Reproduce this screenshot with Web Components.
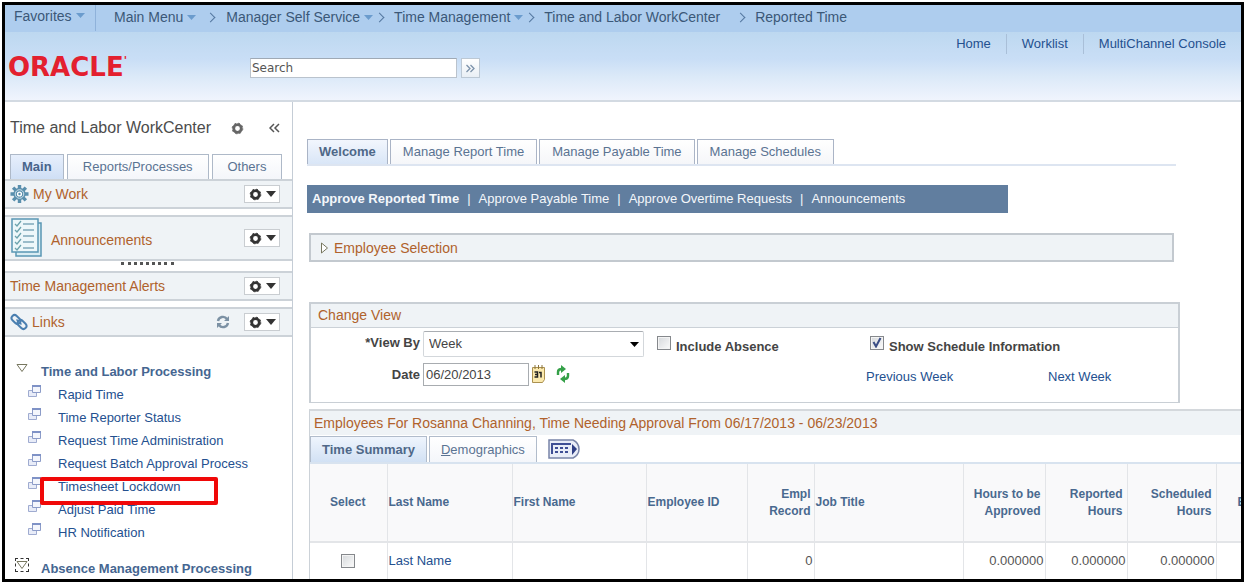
<!DOCTYPE html>
<html lang="en">
<head>
<meta charset="utf-8">
<title>Reported Time</title>
<style>
  html, body { margin: 0; height: 100%; background: #fff; }
  body {
    --xs: 12px; --s: 13px; --m: 14px; --l: 16px;
    --link: #24508f; --slate: #5a7392; --rust: #b0622c; --panel: #eff3f6; --line: #ccd2d8;
    font: 13px/20px "Liberation Sans", Arial, sans-serif;
    color: #444;
  }
</style>
</head>
<body>
<ps-app></ps-app>
<script>
const define = (name, css, html) => {
  const t = document.createElement('template');
  t.innerHTML = `<style>*{box-sizing:border-box}a{color:inherit;text-decoration:none}button,input,select{font:inherit;color:inherit;margin:0}svg{display:block;flex:none}${css}</style>${html}`;
  customElements.define(name, class extends HTMLElement {
    constructor() {
      super();
      this.attachShadow({ mode: 'open' }).append(t.content.cloneNode(true));
    }
  });
};

define('ps-caret', ':host{display:block}', `<svg width="9" height="5" viewBox="0 0 9 5"><path d="M0 0h9L4.500 5z" fill="#6b9ccd"/></svg>`);

define('crumb-bar', `
  :host{display:flex;height:27px;background:#aecdee;color:#3b5878;font-size:var(--m)}
  nav{display:flex;align-items:center;height:24px}
  a{display:flex;align-items:center;gap:4px;white-space:nowrap}
  .fav{width:91px;padding-left:9px;height:27px;border-right:1px solid #8fb2da;margin-right:18px;align-items:center;padding-bottom:3px}
  i{width:7px;height:7px;border:solid #54779f;border-width:1px 1px 0 0;transform:rotate(45deg);margin:0 12px 0 11px;flex:none}
  i.n{margin-left:3px;margin-right:11px}
  i.w{margin-left:17px;margin-right:11px}
  `, `<nav aria-label="Breadcrumb">
    <a class="fav" href="#">Favorites<ps-caret></ps-caret></a>
    <a href="#">Main Menu<ps-caret></ps-caret></a><i></i>
    <a href="#">Manager Self Service <ps-caret></ps-caret></a><i class="n"></i>
    <a href="#">Time Management <ps-caret></ps-caret></a><i class="n"></i>
    <a href="#">Time and Labor WorkCenter</a><i class="w"></i>
    <a href="#">Reported Time</a></nav>`);

define('page-header', `
  :host{display:grid;grid-template-columns:245px 1fr auto;height:70px;background:linear-gradient(#bdd8f0,#c9def6 40%,#dbe9f8 65%,#f0f4fd);border-bottom:2px solid #d3dae2}
  .logo{padding:21px 0 0 3px;font:bold 26px/28px "DejaVu Sans",sans-serif;color:#e3202f;display:flex}
  sup{font-size:11px;line-height:16px}
  form{display:flex;gap:4px;padding-top:26px;align-items:flex-start}
  input{width:207px;height:20px;border:1px solid #bac3cd;border-top-color:#9fa9b5;background:#fff;padding:0 1px;font:12px/16px "DejaVu Sans",sans-serif;color:#555}
  input::placeholder{color:#555;opacity:1}
  button{width:19px;height:20px;border:1px solid #bcc8d4;background:linear-gradient(#fff,#e9eff5);padding:0 4px}
  nav{display:flex;font-size:var(--s);color:var(--link);padding:2px 0 0}
  a{padding:0 15px;line-height:20px;height:20px;border-left:1px solid #a9bfd8}
  a:first-child{border:0}
  `, `<div class="logo">ORACLE<sup>'</sup></div>
   <form><input aria-label="Search" placeholder="Search"><button type="button" aria-label="Go"><svg width="9" height="9" viewBox="0 0 9 9" fill="none" stroke="#7c92aa" stroke-width="1.300"><path d="M.5 1l3.500 3.500L.5 8M4.500 1L8 4.500 4.500 8"/></svg></button></form>
   <nav><a href="#">Home</a><a href="#">Worklist</a><a href="#">MultiChannel Console</a></nav>`);

define('gear-ring', ':host{display:block}', `<svg width="13" height="13" viewBox="0 0 13 13"><circle cx="6.500" cy="6.500" r="3.800" fill="none" stroke="var(--ink,#333)" stroke-width="2.800"/><circle cx="6.500" cy="6.500" r="5.300" fill="none" stroke="var(--ink,#333)" stroke-width="1" stroke-dasharray="2 2.160"/></svg>`);

define('gear-menu', `
  :host{display:block}
  button{display:flex;align-items:center;gap:4px;width:36px;height:18px;background:#fff;border:1px solid #c9cdd1;padding:0 4px;}
  `, `<button type="button" aria-label="Actions"><gear-ring></gear-ring><svg width="10" height="6" viewBox="0 0 10 6"><path d="M0 0h10L5 6z" fill="#333"/></svg></button>`);

define('side-section', `
  :host{display:flex;align-items:center;height:30px;background:var(--panel);border:solid var(--line);border-width:2px 0;padding:0 12px 0 5px;margin-bottom:6px;color:var(--rust);font-size:var(--m)}
  :host([tall]){height:46px;margin-bottom:10px}
  h2{flex:1;margin:0;font:inherit;white-space:nowrap}
  :host([tall]) h2{padding-top:4px}
  ::slotted(svg){margin-right:4px}
  :host([tall]) ::slotted(svg){margin-right:8px}
  `, `<slot name="icon"></slot><h2><slot></slot></h2><slot name="extra"></slot><gear-menu></gear-menu>`);

define('tree-item', `
  :host{display:flex;height:23px;padding-left:23px;position:relative;color:var(--link);font-size:var(--s)}
  a{line-height:23px;margin-left:16px;white-space:nowrap}
  svg{margin-top:1px}
  .mark{display:none}
  :host([marked]) .mark{display:block;position:absolute;left:35px;top:2px;width:178px;height:28px;border:4px solid #f00808;border-radius:2px;z-index:1}
  `, `<svg width="14" height="14" viewBox="0 0 14 14"><path d="M.5 6.500h8v6h-8z" fill="#e8ecf8" stroke="#9fabd0"/><path d="M4.500 1.500h8v7h-8z" fill="#f4f6fc" stroke="#8c9cc8"/><path d="M4 1h9v2H4z" fill="#7f92c6"/></svg><a href="#"><slot></slot></a><span class="mark"></span>`);

define('tree-group', `
  :host{display:block}
  h3{margin:0;display:flex;height:23px;line-height:24px;font-size:var(--s);font-weight:bold;color:#456691;padding-left:10px;white-space:nowrap}
  button{border:1px solid transparent;background:none;width:14px;height:14px;padding:2px 0;margin:1px 12px 0 0}
  :host([focused]) button{border:1px dashed #333}
  `, `<h3><button type="button" aria-label="Collapse"><svg width="12" height="8" viewBox="0 0 12 8"><path d="M1 .5h10L6 7.500z" fill="#fff" stroke="#77775f"/></svg></button><slot name="title"></slot></h3><slot></slot>`);

define('work-center', `
  :host{display:flex;flex-direction:column;border-right:1px solid #c5cdd6}
  header{display:flex;align-items:center;height:52px;padding:0 12px 0 5px;--ink:#666}
  h1{flex:1;margin:0;font-size:var(--l);font-weight:normal;color:#4c4c4c;white-space:nowrap}
  header button{border:0;background:none;padding:0;margin-left:25px}
  .tabs{display:flex;gap:3px;padding:0 10px 0 5px;height:25px}
  .tabs button{border:1px solid #aeb9c8;border-bottom:0;background:linear-gradient(#fff,#f4f6fa);color:var(--slate);font-size:var(--s);line-height:20px;padding:0;height:25px}
  .tabs .on{background:linear-gradient(#e7effc,#cfdff5);font-weight:bold;color:#48648a}
  .tabs button:nth-child(1){flex:53}.tabs button:nth-child(2){flex:144}.tabs button:nth-child(3){flex:70}
  .drop{position:relative}
  .grip{position:absolute;left:116px;bottom:6px;width:53px;border-top:3px dotted #555}
  tree-group{margin-bottom:13px}
  .tree{padding-top:17px}
  `, `<header><h1>Time and Labor WorkCenter</h1><gear-ring></gear-ring><button type="button" aria-label="Collapse panel"><svg width="11" height="10" viewBox="0 0 11 10" fill="none" stroke="#555" stroke-width="1.500"><path d="M5 1L1 5l4 4M10 1L6 5l4 4"/></svg></button></header>
  <div class="tabs"><button type="button" class="on">Main</button><button type="button">Reports/Processes</button><button type="button">Others</button></div>
  <side-section><svg slot="icon" width="19" height="20" viewBox="0 0 20 20"><g stroke="#5a8fad" stroke-width="3.600"><path d="M10 .5v19M.5 10h19M3.300 3.300l13.400 13.400M16.700 3.300L3.300 16.700"/></g><circle cx="10" cy="10" r="6.500" fill="#5a8fad"/><circle cx="10" cy="10" r="4.500" fill="none" stroke="#d5e6ef"/><circle cx="10" cy="10" r="2" fill="none" stroke="#fff" stroke-width="1.500"/></svg>My Work</side-section>
  <div class="drop"><side-section tall><svg slot="icon" width="33" height="40" viewBox="0 0 33 40"><g fill="#d9ecf3" stroke="#5a97b4" stroke-width="1.500"><path d="M6 5h25v33H6z"/><path d="M2 1h26v33H2z" fill="#edf7fa"/></g><path d="M13 6h11M13 12h11M13 18h11M13 24h11M13 30h11" stroke="#7fa9ba" stroke-width="1.500"/><path d="M5 6l2 2 4-5M5 12l2 2 4-5M5 18l2 2 4-5M5 24l2 2 4-5M5 30l2 2 4-5" fill="none" stroke="#6ca3ad" stroke-width="1.300"/></svg>Announcements</side-section><div class="grip"></div></div>
  <side-section>Time Management Alerts</side-section>
  <side-section><svg slot="icon" width="18" height="18" viewBox="0 0 18 18" fill="none" stroke="#4a7fb0" stroke-width="2"><rect x="1" y="3.500" width="10" height="6" rx="3" transform="rotate(45 6 6.500)"/><rect x="7" y="8.500" width="10" height="6" rx="3" transform="rotate(45 12 11.500)"/><path d="M6.500 6.500l5 5" stroke-width="1.500"/></svg>Links<svg slot="extra" style="margin-right:14px" width="14" height="14" viewBox="0 0 14 14"><path d="M2 6a5 5 0 0 1 9-2M12 8a5 5 0 0 1-9 2" fill="none" stroke="#7c91a4" stroke-width="2.400"/><path d="M13 1v5H8zM1 13V8h5z" fill="#7c91a4"/></svg></side-section>
  <div class="tree">
   <tree-group><span slot="title">Time and Labor Processing</span>
    <tree-item>Rapid Time</tree-item><tree-item>Time Reporter Status</tree-item><tree-item>Request Time Administration</tree-item><tree-item>Request Batch Approval Process</tree-item><tree-item marked>Timesheet Lockdown</tree-item><tree-item>Adjust Paid Time</tree-item><tree-item>HR Notification</tree-item></tree-group>
   <tree-group focused><span slot="title">Absence Management Processing</span></tree-group>
  </div>`);

define('page-tabs', `
  :host{display:flex;gap:2px;height:27px;border-bottom:2px solid #dde5f1;margin-right:65px}
  button{border:solid #aab4c6;border-width:1px 1px 0;background:linear-gradient(#fff,#f5f6f9);color:var(--slate);font-size:var(--s);padding:0 12px;height:25px;white-space:nowrap}
  .on{background:linear-gradient(#f2f6fd,#d9e6f7);font-weight:bold;color:#4f6888;padding:0 11px}
  `, `<button type="button" class="on">Welcome</button><button type="button">Manage Report Time</button><button type="button">Manage Payable Time</button><button type="button">Manage Schedules</button>`);

define('sub-nav', `
  :host{display:flex;align-items:center;height:28px;background:#617e9f;color:#f4f7fb;font-size:var(--s);padding-left:5px;margin:19px 233px 20px 0;white-space:nowrap}
  span{margin:0 8px}
  `, `<a href="#"><b>Approve Reported Time</b></a><span>|</span><a href="#">Approve Payable Time</a><span>|</span><a href="#">Approve Overtime Requests</a><span>|</span><a href="#">Announcements</a>`);

define('employee-selection', `
  :host{display:flex;align-items:center;height:29px;border:2px solid #c3c9cf;background:var(--panel);color:var(--rust);font-size:var(--m);margin:0 67px 40px 2px;padding-left:9px;gap:5px}
  button{border:0;background:none;padding:0}h2{margin:0;font:inherit}
  `, `<button type="button" aria-label="Expand"><svg width="9" height="12" viewBox="0 0 9 12"><path d="M1.500 1v10l6-5z" fill="#fff" stroke="#77775f"/></svg></button><h2>Employee Selection</h2>`);

define('check-box', `
  :host{display:inline-block}
  label{display:flex;gap:5px;font-weight:bold;font-size:var(--s);line-height:20px;white-space:nowrap}
  .b{position:relative;width:14px;height:14px}
  input{appearance:none;display:block;width:14px;height:14px;border:1px solid #85888c;background:linear-gradient(135deg,#d5d8db,#fbfbfb);box-shadow:inset 0 0 0 1px #f4f4f4}
  svg{position:absolute;left:2px;top:1px;display:none}
  input:checked+svg{display:block}
  .t{padding-top:1px}
  .t.none{display:none}
  `, `<label><span class="b"><input type="checkbox"><svg width="10" height="11" viewBox="0 0 10 11"><path d="M1.500 5L4 9.500 8.500 1" fill="none" stroke="#3a4d85" stroke-width="2"/></svg></span><span class="t"><slot></slot></span></label>`);

define('change-view', `
  :host{display:block;border:1px solid #c9cfd5;border-width:2px 2px 1px;margin:0 61px 6px 2px;height:101px}
  h2{margin:0;font:inherit;font-size:var(--m);line-height:22px;height:24px;background:var(--panel);border-bottom:1px solid #cbd1d7;color:var(--rust);padding-left:7px}
  .f{display:grid;grid-template-columns:112px 221px 209px 182px 1fr;grid-template-rows:28px 26px;padding-top:3px;row-gap:2px}
  .l{font-weight:bold;font-size:var(--s);line-height:24px;text-align:right;padding-right:3px}
  .l.d{line-height:28px}
  .sel{position:relative}
  select{appearance:none;width:100%;height:26px;border:1px solid #d3d7db;border-top-color:#a9adb2;border-radius:2px;background:#fff;padding:0 5px;font-size:var(--s)}
  .sel svg{position:absolute;right:5px;top:11px;pointer-events:none}
  .date{display:flex;align-items:center}
  .date input{width:106px;height:23px;border:1px solid #a8acb0;padding:0 2px;font-size:var(--s)}
  .date button{border:0;background:none;padding:0;margin-left:3px}
  .date button+button{margin-left:11px}
  check-box{padding:5px 0 0 13px}
  a{color:var(--link);font-size:var(--s);line-height:32px;padding-left:13px}
  .p{grid-column:4}
  check-box.w{grid-column:4/6;padding-left:17px}
  `, `<h2>Change View</h2><div class="f"><label class="l" for="v">*View By</label><div class="sel"><select id="v"><option>Week</option></select><svg width="9" height="5" viewBox="0 0 9 5"><path d="M0 0h9L4.500 5z"/></svg></div><check-box>Include Absence</check-box><check-box class="w" on>Show Schedule Information</check-box>
  <label class="l d" for="d">Date</label><div class="date"><input id="d" value="06/20/2013"><button type="button" aria-label="Calendar"><svg width="13" height="18" viewBox="0 0 13 18"><path d="M.5 2.500h12v12l-2 3H.5z" fill="#fbe9ae" stroke="#ab9150"/><path d="M3 0v4M6.500 0v4M10 0v4" stroke="#8b743b"/><path d="M2.500 7h3v5h-3M3 9.500h2.500M7 7.500h2v5" fill="none" stroke="#222" stroke-width="1.500"/></svg></button><button type="button" aria-label="Refresh"><svg width="14" height="18" viewBox="0 0 14 18"><path d="M2 10V7q0-3 4-3M12 8v3q0 3-4 3" fill="none" stroke="#35a048" stroke-width="2.400"/><path d="M5 0l5 4-5 4zM9 10l-5 4 5 4z" fill="#35a048"/></svg></button></div><a class="p" href="#">Previous Week</a><a href="#">Next Week</a></div>`);

define('employee-grid', `
  :host{display:block;margin-left:2px;border-left:1px solid #ccd2d8;border-top:2px solid #d4d8dc;overflow:hidden}
  h2{margin:0;font:inherit;font-size:var(--m);line-height:24px;background:var(--panel);color:var(--rust);padding-left:4px;white-space:nowrap}
  .tabs{display:flex;gap:2px;height:29px;border-bottom:2px solid #d8e3ef;align-items:flex-end}
  .tabs button{height:26px;border:solid #b1bccb;border-width:1px 1px 0;background:linear-gradient(#fff,#f4f6fa);color:var(--slate);font-size:var(--s);padding:0 11px}
  .tabs .on{background:linear-gradient(#eff5fd,#d2e1f4);font-weight:bold;color:#4f6888}
  .tabs .all{border:0;background:none;padding:0 9px}
  table{border-collapse:collapse;table-layout:fixed;width:1010px}
  th{font-size:var(--xs);line-height:17px;color:#49698f;text-align:left;height:78px;background:#f9f9fa;border:solid #e3e5e8;border-width:0 1px 2px 0;padding:0 2px 0 1px}
  td{height:37px;border-right:1px solid #e3e5e8;padding:0 1px;font-size:var(--s);color:#555}
  .c{text-align:center}.r{text-align:right;padding-right:3px}td.r{padding-right:1px}
  th.h{padding-right:4px}
  td a{color:var(--link)}
  .c check-box{vertical-align:middle;width:14px;height:16px}
  .last{padding-left:21px}
  `, `<h2>Employees For Rosanna Channing, Time Needing Approval From 06/17/2013 - 06/23/2013</h2>
  <div class="tabs"><button type="button" class="on">Time Summary</button><button type="button"><u>D</u>emographics</button><button type="button" class="all" aria-label="Show all columns"><svg width="32" height="26" viewBox="0 0 32 26"><path d="M1 4h24q6 3 6 9t-6 9H1z" fill="#e9edf8" stroke="#7884a8" stroke-width="1.500"/><path d="M4 18V8h18M4 8h19" fill="none" stroke="#3f4f95" stroke-width="2"/><path d="M7 12h15M7 16h15" stroke="#3f4f95" stroke-width="2" stroke-dasharray="3 2"/><path d="M24 8l5 5-5 6z" fill="#2f3f85"/></svg></button></div>
  <table><colgroup><col style="width:77px"><col style="width:125px"><col style="width:134px"><col style="width:101px"><col style="width:67px"><col style="width:149px"><col style="width:82px"><col style="width:82px"><col style="width:89px"><col></colgroup>
  <thead><tr><th class="c">Select</th><th>Last Name</th><th>First Name</th><th>Employee ID</th><th class="r">Empl<br>Record</th><th>Job Title</th><th class="r h">Hours to be<br>Approved</th><th class="r h">Reported<br>Hours</th><th class="r h">Scheduled<br>Hours</th><th class="last">E</th></tr></thead>
  <tbody><tr><td class="c"><check-box></check-box></td><td><a href="#">Last Name</a></td><td></td><td></td><td class="r">0</td><td></td><td class="r">0.000000</td><td class="r">0.000000</td><td class="r">0.000000</td><td></td></tr></tbody></table>`);

define('ps-app', `
  :host{display:block;height:100%;padding:2px 1px 1px 2px;box-sizing:border-box}
  .frame{height:100%;border:3px solid #000;overflow:hidden;display:grid;grid-template-rows:auto auto 1fr}
  .body{display:grid;grid-template-columns:288px minmax(0,1fr);min-height:0}
  main{padding:37px 0 0 14px}
  `, `<div class="frame"><crumb-bar></crumb-bar><page-header></page-header><div class="body"><work-center></work-center><main><page-tabs></page-tabs><sub-nav></sub-nav><employee-selection></employee-selection><change-view></change-view><employee-grid></employee-grid></main></div></div>`);

const main = document.querySelector('ps-app').shadowRoot;
main.querySelector('change-view').shadowRoot.querySelector('check-box[on]').shadowRoot.querySelector('input').checked = true;
const rowBox = main.querySelector('employee-grid').shadowRoot.querySelector('check-box').shadowRoot;
rowBox.querySelector('.t').classList.add('none');
rowBox.querySelector('input').setAttribute('aria-label', 'Select row');
</script>
</body>
</html>
